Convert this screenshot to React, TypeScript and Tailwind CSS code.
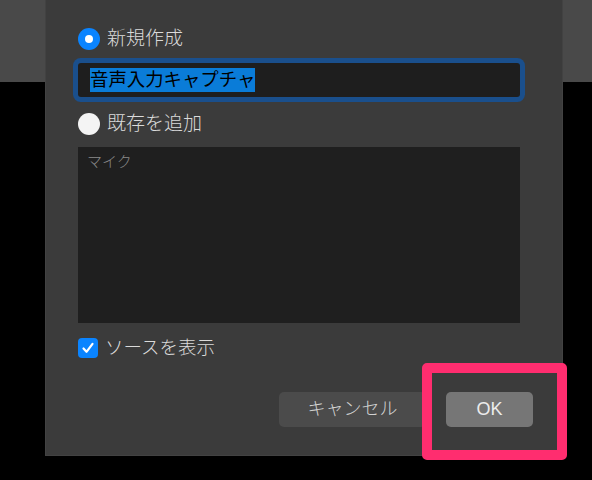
import React from "react";

const FONT = { fontFamily: '"Liberation Sans", "Noto Sans CJK JP", sans-serif' };

export default function App() {
  return (
    <div className="relative w-[592px] h-[480px] bg-black overflow-hidden" style={FONT}>
      <div className="h-[82px] bg-[#494949]" />

      {/* dialog window */}
      <div className="absolute left-[45px] top-0 w-[518px] h-[456px] bg-[#3b3b3b] border-x border-b border-[#424242] flex flex-col pl-[32px] pr-[29px] text-[#dadada] font-light">
        {/* radio 1 */}
        <div className="mt-[28px] h-[22px] flex items-center gap-[7px]">
          <div className="w-[22px] h-[22px] rounded-full bg-[#0a84ff] flex items-center justify-center">
            <div className="w-[8px] h-[8px] rounded-full bg-white" />
          </div>
          <span className="text-[19px] leading-[22px]">新規作成</span>
        </div>

        {/* input */}
        <div className="mt-[13px] w-[442px] h-[34px] rounded-[3px] bg-[#1e1e1e] ring-[5px] ring-[#1a4f8c] flex items-center pl-[12px]">
          <span className="bg-[#0a7cd8] text-black text-[18.4px] leading-[24px] font-normal">音声入力キャプチャ</span>
        </div>

        {/* radio 2 */}
        <div className="mt-[16px] h-[22px] flex items-center gap-[7px]">
          <div className="w-[22px] h-[22px] rounded-full bg-[#f4f4f4]" />
          <span className="text-[19px] leading-[22px]">既存を追加</span>
        </div>

        {/* list */}
        <div className="mt-[12px] w-[442px] h-[176px] bg-[#1f1f1f] pl-[9px] pt-[3px]">
          <span className="text-[15px] leading-[20px] text-[#8a8a8a]">マイク</span>
        </div>

        {/* checkbox */}
        <div className="mt-[15px] h-[20px] flex items-center gap-[7px]">
          <div className="w-[20px] h-[20px] rounded-[4px] bg-[#0a84ff] flex items-center justify-center">
            <svg width="14" height="14" viewBox="0 0 14 14" fill="none">
              <path d="M2.5 7.5 L5.5 10.8 L11.5 2.8" stroke="white" strokeWidth="2.2" strokeLinecap="round" strokeLinejoin="round" />
            </svg>
          </div>
          <span className="text-[18.5px] leading-[22px]">ソースを表示</span>
        </div>

        {/* buttons */}
        <div className="mt-[34px] flex justify-end gap-[20px]">
          <div className="w-[147px] h-[35px] rounded-[5px] bg-[#4b4b4b] flex items-center justify-center text-[18px] text-[#d2d2d2]">
            キャンセル
          </div>
          <div className="w-[87px] h-[35px] rounded-[5px] bg-[#767676] flex items-center justify-center text-[18px] text-[#ececec]">
            OK
          </div>
        </div>
      </div>

      {/* highlight annotation */}
      <div className="absolute left-[422px] top-[363px] w-[145px] h-[97px] border-[10px] border-[#ff2d6f] rounded-[5px]" />
    </div>
  );
}
